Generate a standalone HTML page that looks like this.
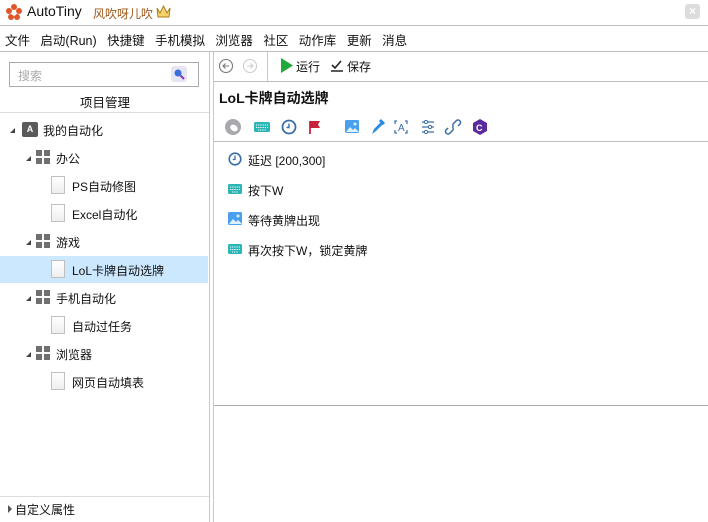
<!DOCTYPE html>
<html><head><meta charset="utf-8"><style>
*{margin:0;padding:0;box-sizing:border-box}
body{width:708px;height:522px;overflow:hidden;background:#fff;font-family:"Liberation Sans","Noto Sans CJK SC",sans-serif;font-size:12px;color:#111;position:relative}
.a{position:absolute;white-space:nowrap}
.hl{position:absolute;height:1px;background:#bdbdbd}
.vl{position:absolute;width:1px;background:#c8c8c8}
.tri{position:absolute;width:0;height:0;border-left:5px solid transparent;border-bottom:5px solid #444}
.grid{position:absolute;width:14px;height:14px}
.grid i{position:absolute;width:6px;height:6px;background:#707070}
.doc{position:absolute;width:14px;height:18px;border:1px solid #c0c0c0;background:linear-gradient(#fff,#eee)}
</style></head><body>
<svg class="a" style="left:6px;top:4px" width="16" height="16" viewBox="0 0 16 16"><g fill="#e0562a"><circle cx="8" cy="3" r="3"/><circle cx="13" cy="7" r="3"/><circle cx="11" cy="13" r="3"/><circle cx="5" cy="13" r="3"/><circle cx="3" cy="7" r="3"/></g><circle cx="8" cy="9" r="2.6" fill="#fff"/></svg>
<div class="a" style="left:27px;top:3px;font-size:14px;color:#111">AutoTiny</div>
<div class="a" style="left:93px;top:5px;font-size:12px;color:#a05a1a">风吹呀儿吹</div>
<svg class="a" style="left:156px;top:5px" width="15" height="13" viewBox="0 0 15 13"><path d="M1 3 L4 8 L7.5 1 L11 8 L14 3 L13 12 L2 12 Z" fill="#f5d36a" stroke="#b07a1a" stroke-width="1"/></svg>
<div class="a" style="left:685px;top:4px;width:15px;height:15px;background:#ddd;border-radius:3px;color:#fff;font-size:12px;text-align:center;line-height:15px;font-weight:bold">×</div>
<div class="hl" style="left:0;top:25px;width:708px"></div>
<div class="a" style="left:5px;top:30px;font-size:12.5px;word-spacing:0">文件&nbsp;&nbsp;&nbsp;启动(Run)&nbsp;&nbsp;&nbsp;快捷键&nbsp;&nbsp;&nbsp;手机模拟&nbsp;&nbsp;&nbsp;浏览器&nbsp;&nbsp;&nbsp;社区&nbsp;&nbsp;&nbsp;动作库&nbsp;&nbsp;&nbsp;更新&nbsp;&nbsp;&nbsp;消息</div>
<div class="hl" style="left:0;top:51px;width:708px"></div>
<div class="vl" style="left:209px;top:52px;height:470px"></div>
<div class="vl" style="left:213px;top:52px;height:470px"></div>
<div class="a" style="left:9px;top:62px;width:190px;height:25px;border:1px solid #aaa"></div>
<div class="a" style="left:18px;top:67px;color:#aaa">搜索</div>
<div class="a" style="left:171px;top:66px;width:16px;height:16px;background:#e6e6f2;border-radius:3px"></div>
<svg class="a" style="left:172px;top:67px" width="14" height="14" viewBox="0 0 14 14"><circle cx="6" cy="6" r="3.5" fill="#3b6fd8"/><path d="M8.5 8.5 L12 12" stroke="#8a3ac0" stroke-width="2"/></svg>
<div class="a" style="left:80px;top:92px;font-size:12.5px">项目管理</div>
<div class="hl" style="left:0;top:112px;width:209px;background:#ddd"></div>
<div class="tri" style="left:10px;top:128px"></div>
<div class="a" style="left:22px;top:122px;width:16px;height:15px;background:#5a5a5a;border-radius:2px;color:#fff;font-size:9px;text-align:center;line-height:15px;font-weight:bold">A</div>
<div class="a" style="left:43px;top:122px">我的自动化</div>
<div class="tri" style="left:26px;top:156px"></div>
<div class="grid" style="left:36px;top:150px"><i style="left:0;top:0"></i><i style="left:8px;top:0"></i><i style="left:0;top:8px"></i><i style="left:8px;top:8px"></i></div>
<div class="a" style="left:56px;top:150px">办公</div>
<div class="doc" style="left:51px;top:176px"></div>
<div class="a" style="left:72px;top:178px">PS自动修图</div>
<div class="doc" style="left:51px;top:204px"></div>
<div class="a" style="left:72px;top:206px">Excel自动化</div>
<div class="tri" style="left:26px;top:240px"></div>
<div class="grid" style="left:36px;top:234px"><i style="left:0;top:0"></i><i style="left:8px;top:0"></i><i style="left:0;top:8px"></i><i style="left:8px;top:8px"></i></div>
<div class="a" style="left:56px;top:234px">游戏</div>
<div class="a" style="left:0;top:256px;width:208px;height:27px;background:#cce8ff"></div>
<div class="doc" style="left:51px;top:260px"></div>
<div class="a" style="left:72px;top:262px">LoL卡牌自动选牌</div>
<div class="tri" style="left:26px;top:296px"></div>
<div class="grid" style="left:36px;top:290px"><i style="left:0;top:0"></i><i style="left:8px;top:0"></i><i style="left:0;top:8px"></i><i style="left:8px;top:8px"></i></div>
<div class="a" style="left:56px;top:290px">手机自动化</div>
<div class="doc" style="left:51px;top:316px"></div>
<div class="a" style="left:72px;top:318px">自动过任务</div>
<div class="tri" style="left:26px;top:352px"></div>
<div class="grid" style="left:36px;top:346px"><i style="left:0;top:0"></i><i style="left:8px;top:0"></i><i style="left:0;top:8px"></i><i style="left:8px;top:8px"></i></div>
<div class="a" style="left:56px;top:346px">浏览器</div>
<div class="doc" style="left:51px;top:372px"></div>
<div class="a" style="left:72px;top:374px">网页自动填表</div>
<div class="hl" style="left:0;top:496px;width:209px;background:#ddd"></div>
<div class="a" style="left:8px;top:505px;width:0;height:0;border-top:4px solid transparent;border-bottom:4px solid transparent;border-left:4px solid #555"></div>
<div class="a" style="left:15px;top:501px">自定义属性</div>
<svg class="a" style="left:218px;top:58px" width="16" height="16" viewBox="0 0 16 16"><circle cx="8" cy="8" r="6.5" fill="none" stroke="#777" stroke-width="1.1"/><path d="M11 8H5M7.5 5.5L5 8l2.5 2.5" fill="none" stroke="#777" stroke-width="1.1"/></svg>
<svg class="a" style="left:242px;top:58px" width="16" height="16" viewBox="0 0 16 16"><circle cx="8" cy="8" r="6.5" fill="none" stroke="#ccc" stroke-width="1.1"/><path d="M5 8h6M8.5 5.5L11 8l-2.5 2.5" fill="none" stroke="#ccc" stroke-width="1.1"/></svg>
<div class="vl" style="left:267px;top:52px;height:29px"></div>
<svg class="a" style="left:281px;top:58px" width="12" height="15" viewBox="0 0 12 15"><path d="M0 0L12 7.5L0 15Z" fill="#1faa3a"/></svg>
<div class="a" style="left:296px;top:58px">运行</div>
<svg class="a" style="left:331px;top:60px" width="12" height="12" viewBox="0 0 12 12"><path d="M1 5l3 3 6-7" fill="none" stroke="#222" stroke-width="1.6"/><path d="M0 11h12" stroke="#222" stroke-width="1.5"/></svg>
<div class="a" style="left:347px;top:58px">保存</div>
<div class="hl" style="left:214px;top:81px;width:494px"></div>
<div class="a" style="left:219px;top:88px;font-size:14px;font-weight:bold">LoL卡牌自动选牌</div>
<svg class="a" style="left:224px;top:118px" width="266" height="18" viewBox="0 0 266 18">
<circle cx="9" cy="9" r="8" fill="#a8a8ae"/><ellipse cx="10" cy="10" rx="4" ry="3" fill="#fff" transform="rotate(35 10 10)"/>
<rect x="30" y="4" width="16" height="10" rx="1.5" fill="#2bb5b5"/><path d="M32 7h12M32 9.5h12M34 12h8" stroke="#fff" stroke-width="1" stroke-dasharray="1.2 1"/>
<circle cx="65" cy="9" r="6.5" fill="none" stroke="#3a6ea8" stroke-width="1.8"/><path d="M65 5.5v4h-2.5" fill="none" stroke="#3a6ea8" stroke-width="1.4"/>
<path d="M86 3v13" stroke="#c8213a" stroke-width="1.8"/><path d="M86 3h10l-2 3.5 2 3.5h-10z" fill="#c8213a"/>
<rect x="121" y="2" width="14" height="13" rx="1.5" fill="#4aa0ee"/><path d="M122 14l4-5 3 3 2-2 4 4z" fill="#dff0ff"/><circle cx="131" cy="6" r="1.5" fill="#dff0ff"/>
<path d="M148 16l2-5 7-7 2 2-7 7z" fill="#2a8ae0"/><path d="M156 2l4 4" stroke="#2a8ae0" stroke-width="3"/>
<path d="M173 3h-2v3M173 15h-2v-3M181 3h2v3M181 15h2v-3" fill="none" stroke="#3a6ea8" stroke-width="1.2"/><text x="174" y="13" font-size="10" fill="#3a6ea8" font-family="Liberation Sans">A</text>
<path d="M198 4h12M198 9h12M198 14h12" stroke="#3a6ea8" stroke-width="1.3"/><circle cx="202" cy="4" r="1.6" fill="#fff" stroke="#3a6ea8"/><circle cx="206" cy="9" r="1.6" fill="#fff" stroke="#3a6ea8"/><circle cx="202" cy="14" r="1.6" fill="#fff" stroke="#3a6ea8"/>
<path d="M224 10l-2 2a2.5 2.5 0 0 0 3.5 3.5l3-3a2.5 2.5 0 0 0 0-3.5M234 8l2-2a2.5 2.5 0 0 0-3.5-3.5l-3 3a2.5 2.5 0 0 0 0 3.5" fill="none" stroke="#3a6ea8" stroke-width="1.5"/>
<path d="M256 1l7 4v8l-7 4-7-4v-8z" fill="#5b2b9e"/><text x="252" y="13" font-size="9" font-weight="bold" fill="#fff" font-family="Liberation Sans">C</text>
</svg>
<div class="hl" style="left:214px;top:141px;width:494px"></div>
<svg class="a" style="left:228px;top:152px" width="14" height="14" viewBox="0 0 14 14"><circle cx="7" cy="7" r="5.8" fill="none" stroke="#3a6ea8" stroke-width="1.6"/><path d="M7 3.5v4H4.8" fill="none" stroke="#3a6ea8" stroke-width="1.3"/></svg>
<div class="a" style="left:248px;top:152px">延迟 [200,300]</div>
<svg class="a" style="left:228px;top:184px" width="14" height="10" viewBox="0 0 14 10"><rect width="14" height="10" rx="1.5" fill="#2bb5b5"/><path d="M2 3h10M2 5.5h10M4 8h6" stroke="#fff" stroke-width="1" stroke-dasharray="1.2 1"/></svg>
<div class="a" style="left:248px;top:182px">按下W</div>
<svg class="a" style="left:228px;top:212px" width="14" height="13" viewBox="0 0 14 13"><rect width="14" height="13" rx="1.5" fill="#4aa0ee"/><path d="M1 12l4-5 3 3 2-2 4 4z" fill="#dff0ff"/><circle cx="10" cy="4" r="1.5" fill="#dff0ff"/></svg>
<div class="a" style="left:248px;top:212px">等待黄牌出现</div>
<svg class="a" style="left:228px;top:244px" width="14" height="10" viewBox="0 0 14 10"><rect width="14" height="10" rx="1.5" fill="#2bb5b5"/><path d="M2 3h10M2 5.5h10M4 8h6" stroke="#fff" stroke-width="1" stroke-dasharray="1.2 1"/></svg>
<div class="a" style="left:248px;top:242px">再次按下W，锁定黄牌</div>
<div class="hl" style="left:214px;top:405px;width:494px;background:#aaa"></div>
</body></html>
